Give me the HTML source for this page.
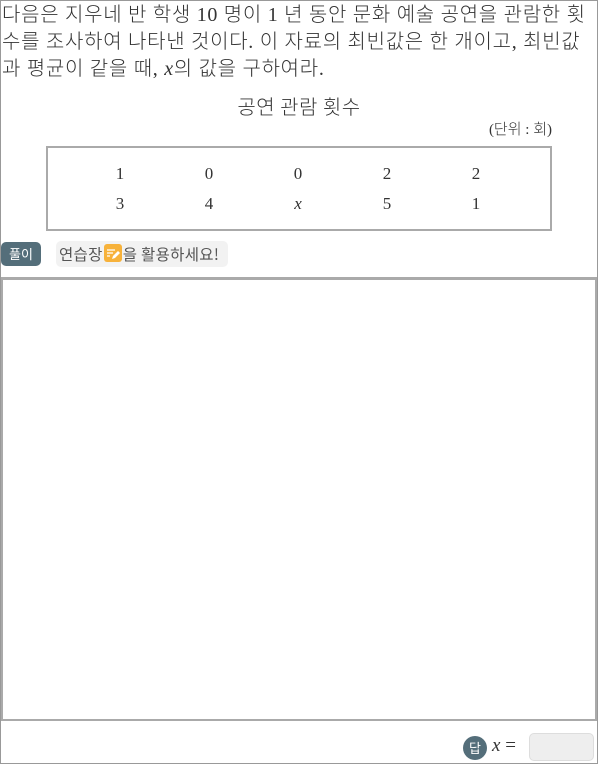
<!DOCTYPE html>
<html><head><meta charset="utf-8"><style>
*{margin:0;padding:0;box-sizing:border-box}
body{width:598px;height:764px;position:relative;background:#fff;font-family:"Liberation Serif","Noto Sans CJK KR",serif;color:#333;overflow:hidden}
.frame{position:absolute;left:0;top:0;width:598px;height:764px;border:1px solid #999}
.q{position:absolute;left:2px;top:2px;width:600px;font-size:20px;line-height:27px;font-family:"Liberation Serif","Noto Sans CJK KR",sans-serif;letter-spacing:0.7px;font-weight:300;white-space:nowrap}
.title{position:absolute;left:0;width:598px;top:93px;text-align:center;font-size:20px;line-height:26px;font-family:"Noto Sans CJK KR",sans-serif;font-weight:300;letter-spacing:0.5px}
.unit{position:absolute;right:46px;top:120px;font-size:15px;line-height:20px;font-family:"Liberation Serif","Noto Sans CJK KR",sans-serif;font-weight:300}
.tbl{position:absolute;left:46px;top:146px;width:506px;height:85px;border:2px solid #aaa}
.c{position:absolute;font-size:17px;width:40px;text-align:center}
.btn{position:absolute;left:1px;top:242px;width:40px;height:24px;background:#546e7a;color:#fff;border-radius:5px;font-size:13px;text-align:center;line-height:24px;font-family:"Noto Sans CJK KR",sans-serif}
.tip{position:absolute;left:56px;top:241px;width:172px;height:26px;background:#f2f2f2;border-radius:5px;font-size:15.5px;line-height:26px;padding-left:3px;color:#555;font-family:"Noto Sans CJK KR",sans-serif;white-space:nowrap;letter-spacing:0.3px}
.ic{display:inline-block;width:18px;height:18px;background:#f7b23b;border-radius:3px;vertical-align:-3px;margin:0 1px}
.area{position:absolute;left:1px;top:277px;width:596px;height:444px;border:2px solid #aaa;border-top-width:3px}
.dap{position:absolute;left:463px;top:736px;width:24px;height:24px;border-radius:50%;background:#546e7a;color:#fff;font-size:13px;text-align:center;line-height:24px;font-family:"Noto Sans CJK KR",sans-serif}
.eq{position:absolute;left:492px;top:735px;font-size:19px}
.inp{position:absolute;left:529px;top:733px;width:65px;height:28px;background:#eee;border:1px solid #ddd;border-radius:5px}
</style></head><body>
<div class="frame"></div>
<div class="q">다음은 지우네 반 학생 10 명이 1 년 동안 문화 예술 공연을 관람한 횟<br>수를 조사하여 나타낸 것이다. 이 자료의 최빈값은 한 개이고, 최빈값<br>과 평균이 같을 때, <i>x</i>의 값을 구하여라.</div>
<div class="title">공연 관람 횟수</div>
<div class="unit">(단위 : 회)</div>
<div class="tbl">
<div class="c" style="left:52px;top:16px">1</div><div class="c" style="left:141px;top:16px">0</div><div class="c" style="left:230px;top:16px">0</div><div class="c" style="left:319px;top:16px">2</div><div class="c" style="left:408px;top:16px">2</div>
<div class="c" style="left:52px;top:46px">3</div><div class="c" style="left:141px;top:46px">4</div><div class="c" style="left:230px;top:46px"><i>x</i></div><div class="c" style="left:319px;top:46px">5</div><div class="c" style="left:408px;top:46px">1</div>
</div>
<div class="btn">풀이</div>
<div class="tip">연습장<span class="ic"><svg width="18" height="18" viewBox="0 0 18 18"><path d="M3 5h8M3 8h6M3 11h3" stroke="#fff" stroke-width="1.3"/><path d="M8 14l1-3 5-5 2 2-5 5z" fill="#fff"/></svg></span>을 활용하세요!</div>
<div class="area"></div>
<div class="dap">답</div>
<div class="eq"><i>x</i> =</div>
<div class="inp"></div>
</body></html>
